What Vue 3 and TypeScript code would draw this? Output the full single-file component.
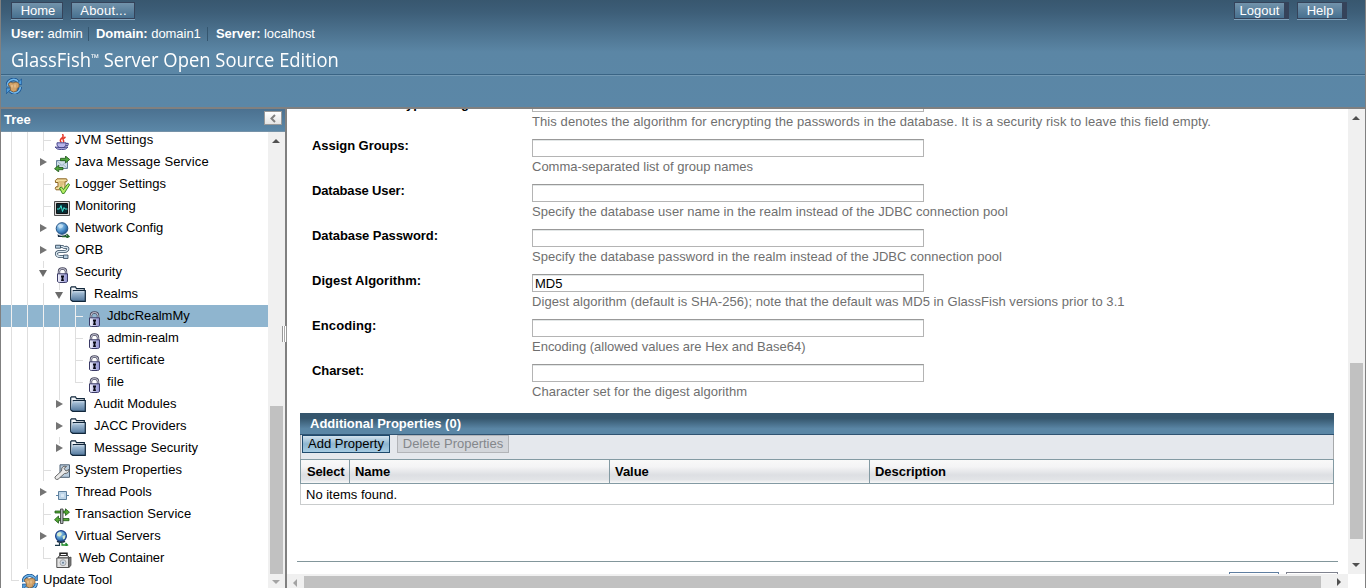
<script setup lang="ts">
interface TreeNode {
  label: string
  icon: string
  level: number
  toggle?: 'open' | 'closed'
  last?: boolean
  stub?: boolean
  selected?: boolean
  drop: number
  spacing: number
}

const nodes: TreeNode[] = [
  { label: 'JVM Settings', icon: 'java', level: 2, drop: 5, spacing: 0.15 },
  { label: 'Java Message Service', icon: 'jms', level: 2, toggle: 'closed', drop: 5, spacing: 0.15 },
  { label: 'Logger Settings', icon: 'logger', level: 2, drop: 5, spacing: 0 },
  { label: 'Monitoring', icon: 'monitor', level: 2, drop: 5, spacing: 0 },
  { label: 'Network Config', icon: 'network', level: 2, toggle: 'closed', drop: 5, spacing: -0.05 },
  { label: 'ORB', icon: 'orb', level: 2, toggle: 'closed', drop: 5, spacing: 0 },
  { label: 'Security', icon: 'lock', level: 2, toggle: 'open', stub: true, drop: 6, spacing: 0 },
  { label: 'Realms', icon: 'folder', level: 3, toggle: 'open', stub: true, drop: 3, spacing: 0 },
  { label: 'JdbcRealmMy', icon: 'lock', level: 4, selected: true, drop: 6, spacing: 0.05 },
  { label: 'admin-realm', icon: 'lock', level: 4, drop: 6, spacing: -0.05 },
  { label: 'certificate', icon: 'lock', level: 4, drop: 6, spacing: 0.2 },
  { label: 'file', icon: 'lock', level: 4, last: true, drop: 6, spacing: 0.1 },
  { label: 'Audit Modules', icon: 'folder', level: 3, toggle: 'closed', stub: true, drop: 3, spacing: 0 },
  { label: 'JACC Providers', icon: 'folder', level: 3, toggle: 'closed', drop: 3, spacing: 0 },
  { label: 'Message Security', icon: 'folder', level: 3, toggle: 'closed', stub: true, drop: 3, spacing: 0.05 },
  { label: 'System Properties', icon: 'props', level: 2, drop: 5, spacing: 0.05 },
  { label: 'Thread Pools', icon: 'pool', level: 2, toggle: 'closed', drop: 5, spacing: -0.05 },
  { label: 'Transaction Service', icon: 'tx', level: 2, drop: 5, spacing: 0.1 },
  { label: 'Virtual Servers', icon: 'vs', level: 2, toggle: 'closed', drop: 5, spacing: 0.05 },
  { label: 'Web Container', icon: 'web', level: 2, last: true, drop: 5, spacing: -0.1 },
  { label: 'Update Tool', icon: 'update', level: 0, last: true, drop: 5, spacing: 0 },
]

interface Field { label: string; value: string; help: string; ls: number; hs: number }
const fields: Field[] = [
  { label: 'Password Encryption Algorithm:', value: '', help: 'This denotes the algorithm for encrypting the passwords in the database. It is a security risk to leave this field empty.', ls: 0, hs: 0.09 },
  { label: 'Assign Groups:', value: '', help: 'Comma-separated list of group names', ls: -0.05, hs: 0 },
  { label: 'Database User:', value: '', help: 'Specify the database user name in the realm instead of the JDBC connection pool', ls: -0.15, hs: 0.05 },
  { label: 'Database Password:', value: '', help: 'Specify the database password in the realm instead of the JDBC connection pool', ls: -0.07, hs: 0.05 },
  { label: 'Digest Algorithm:', value: 'MD5', help: 'Digest algorithm (default is SHA-256); note that the default was MD5 in GlassFish versions prior to 3.1', ls: 0.03, hs: 0.05 },
  { label: 'Encoding:', value: '', help: 'Encoding (allowed values are Hex and Base64)', ls: 0.1, hs: -0.01 },
  { label: 'Charset:', value: '', help: 'Character set for the digest algorithm', ls: -0.1, hs: 0.03 },
]
const columns = ['Select', 'Name', 'Value', 'Description']
</script>

<template>
  <div class="frame">
    <svg class="defs" width="0" height="0" aria-hidden="true">
      <defs>
        <linearGradient id="gFolder" x1="0" y1="0" x2="0" y2="1"><stop offset="0" stop-color="#b3cbe0" /><stop offset="1" stop-color="#53789d" /></linearGradient>
        <linearGradient id="gLock" x1="0" y1="0" x2="1" y2="0"><stop offset="0" stop-color="#f4f4fc" /><stop offset="1" stop-color="#8d8fd0" /></linearGradient>
        <radialGradient id="gGlobe" cx=".35" cy=".3" r=".75"><stop offset="0" stop-color="#b5d9f3" /><stop offset=".6" stop-color="#4b8fc8" /><stop offset="1" stop-color="#1d4f88" /></radialGradient>
      </defs>
      <symbol id="i-java" viewBox="0 0 16 16">
        <path d="M7.500 8.500C5 6.500 7 5 8.500 3.500 9.500 2.500 9 1 8.500 0M11.500 3C9 4.500 8.500 5.500 9.500 6.500 10 7.500 9.500 8 9 8.500" fill="none" stroke="#e5392b" stroke-width="1.500" />
        <path d="M3 8.800h9v2.200q-.5 2-2.500 2.500h-4Q3.500 13 3 11z" fill="#b7b5ea" stroke="#3c3a82" stroke-width=".9" />
        <path d="M12 9.500q3-.5 2 1.300-.7 1-2.500 1" fill="none" stroke="#4d4b91" stroke-width="1.200" />
        <path d="M1 13q6.500 1.500 13 0-1.500 2.700-6.500 2.700T1 13z" fill="#b9b8e6" stroke="#3c3a82" stroke-width=".9" />
      </symbol>
      <symbol id="i-jms" viewBox="0 0 16 16">
        <path d="M2.500 4.500h11v8h-11z" fill="#cfdeea" stroke="#67819a" />
        <path d="M3 5l5 4.500L13 5M3 12l4-3.500M13 12L9 8.500" fill="none" stroke="#93abc0" stroke-width=".8" />
        <path d="M6.500 2.300h5V0l4.200 3.500L11.500 7V4.700h-5z" fill="#4da33a" stroke="#1d5419" stroke-width=".8" />
        <path d="M9 11.500H4.700V9.200L.5 12.700l4.200 3.200v-2.200H9z" fill="#4da33a" stroke="#1d5419" stroke-width=".8" />
      </symbol>
      <symbol id="i-logger" viewBox="0 0 16 16">
        <path d="M3 .8h9.500q1.500 1.500 0 3H11v8H2q-1.500-1.500 0-3h2V4.500H1.500Q.5 2.500 3 .8z" fill="#f3dfa0" stroke="#8a6320" />
        <path d="M4.500 4H11M5.500 6H9.500M5.500 8h3" stroke="#b98f4c" stroke-width=".8" />
        <path d="M5.500 10l2-1 2 2.500L14 5.500l1.700 1.200-5.700 9H8.500z" fill="#b4ec63" stroke="#2d7d1d" stroke-width=".9" />
      </symbol>
      <symbol id="i-monitor" viewBox="0 0 16 16">
        <path d="M.5 1.500h15v14H.5z" fill="#d7d7d7" stroke="#505050" />
        <path d="M2.500 3.500h11v10h-11z" fill="#082c34" stroke="#111" />
        <path d="M3 9h2.500L7 5.500l1.500 6L10 7.500l1 1.500h2.500" fill="none" stroke="#3fe0cf" />
      </symbol>
      <symbol id="i-network" viewBox="0 0 16 16">
        <circle cx="8" cy="6.500" r="5.800" fill="url(#gGlobe)" stroke="#245385" />
        <path d="M3.500 3.500q3-3 6 0-1 3-4 3z" fill="#d2ebf9" opacity=".6" />
        <path d="M3.500 12.300q4.500 3 9 0l-.5 2.700H4z" fill="#172d43" />
        <path d="M8 14.500h7M12.500 12l2.500 2.500-2.500 1.500" fill="none" stroke="#25682b" stroke-width="1.300" />
      </symbol>
      <symbol id="i-orb" viewBox="0 0 16 16">
        <path d="M2 2.500h6.500q1.500 1.500 4 .8 2 .7 1 2.700-1 1.500-3.500 1.500H5q-3 .5-2.500 3 .5 2 4 2h5" fill="none" stroke="#354b60" stroke-width="3" />
        <path d="M2 2.500h6.500q1.500 1.500 4 .8 2 .7 1 2.700-1 1.500-3.500 1.500H5q-3 .5-2.500 3 .5 2 4 2h5" fill="none" stroke="#d9e6ee" stroke-width="1.400" />
        <path d="M1.500 1.200h5v3h-5zM9.500 11h4.500v3.500H9.500z" fill="#b8cfe0" stroke="#2d4358" stroke-width=".8" />
      </symbol>
      <symbol id="i-lock" viewBox="0 0 16 16">
        <path d="M5 8V4.500Q5 1.500 8.500 1.500T12 4.500V8" fill="none" stroke="#4a4a60" stroke-width="2.400" />
        <path d="M5 8V4.500Q5 1.500 8.500 1.500T12 4.500V8" fill="none" stroke="#cfcfdd" stroke-width="1" />
        <path d="M3.500 6.800h10v7.700q-1 1-2 1h-6q-1 0-2-1z" fill="url(#gLock)" stroke="#3a3a66" />
        <path d="M7 8.500h3V10l-.7 1 .7 3H7l.7-3L7 10z" fill="#0a0a16" />
      </symbol>
      <symbol id="i-folder" viewBox="0 0 16 16">
        <path d="M.7 14V1.700L1.500.8h4l1 1.900h7.800v2" fill="#f4f7fa" stroke="#10263a" stroke-width="1.200" />
        <path d="M2.700 4.700h12.600v10.600H2.700L.7 14" fill="url(#gFolder)" stroke="#10263a" stroke-width="1.200" />
        <path d="M3.600 5.700h10.700" stroke="#d3e2ee" />
      </symbol>
      <symbol id="i-props" viewBox="0 0 16 16">
        <path d="M6 .8h9.500v12.500H6z" fill="#b8cbdc" stroke="#4d6175" />
        <path d="M12.500 2.500l-2.500 2 2 2.500 3-1.500q0 4-4.500 4L4 15.300q-2 .7-3-1Q.5 13 2 12L7.500 7q-.5-4 2.500-4.800z" fill="#e9e9e9" stroke="#5a5a5a" stroke-width=".9" />
      </symbol>
      <symbol id="i-pool" viewBox="0 0 16 16">
        <path d="M2 9.500h3M12 9.500h3" stroke="#5b83a6" />
        <path d="M4.500 5.500h8v8h-8z" fill="#bcd4e8" stroke="#5d7f9c" />
        <path d="M7 8h3v3H7z" fill="#d9e8f4" />
      </symbol>
      <symbol id="i-tx" viewBox="0 0 16 16">
        <path d="M1 3h10.500V.8l4 3.400-4 3.300V5H1zM15 10.500H4.500V8l-4 3.700 4 3.500v-2.500H15z" fill="#54a832" stroke="#205919" stroke-width=".8" />
        <path d="M6.500 1h2.500v14.500H6.500z" fill="#aeb6ba" stroke="#333" stroke-width=".8" />
      </symbol>
      <symbol id="i-vs" viewBox="0 0 16 16">
        <circle cx="7" cy="6" r="5.400" fill="url(#gGlobe)" stroke="#1b3f88" stroke-width="1.200" />
        <path d="M3 3.500L6 2l2 2-2 2.500-2.500-.5zM8.500 6l3-1-.5 3.500-2 1z" fill="#d5ecce" />
        <path d="M3 11.300q4 2 8 0" fill="none" stroke="#172d43" stroke-width="1.600" />
        <path d="M1 15.300h4.500v-2.500" fill="none" stroke="#1d3a4a" stroke-width="1.200" />
        <path d="M8 13v2h5M11.500 13l2 2-2 1" fill="none" stroke="#1f8a2a" stroke-width="1.300" />
      </symbol>
      <symbol id="i-web" viewBox="0 0 16 16">
        <path d="M4 4V1.200h7V4" fill="none" stroke="#222" stroke-width="1.500" />
        <path d="M3.500 3.500h8l2 2.500H2z" fill="#eee" stroke="#333" />
        <path d="M.8 6h12v9.500H.8z" fill="#e2e2e2" stroke="#555" /><path d="M12.800 6l2.200-1v8.500l-2.200 2z" fill="#888" stroke="#333" stroke-width=".7" />
        <circle cx="7" cy="10.700" r="3" fill="#cfd8e2" stroke="#999" stroke-width=".8" /><circle cx="7" cy="10.700" r="1" fill="#667e96" />
      </symbol>
      <symbol id="i-update" viewBox="0 0 16 16">
        <path d="M1.500 8A6 6 0 0 1 12 3.500M14.300 9A6 6 0 0 1 4 13" fill="none" stroke="#164f8e" stroke-width="3.200" />
        <path d="M1.500 8A6 6 0 0 1 12 3.500M14.300 9A6 6 0 0 1 4 13" fill="none" stroke="#71b7ea" stroke-width="1.700" />
        <path d="M15.700.8v5.700H10zM.3 15.700V10H6z" fill="#4f9cda" stroke="#164f8e" stroke-width=".7" />
        <path d="M2 6l2.500-1.700L7 5l3-.9 3 1.400V9l-2 1.500v2.300L7.500 14l-3-1.500-.3-3.500z" fill="#d2a36a" stroke="#835a2c" stroke-width=".7" />
        <path d="M6 7v2.500M9 6.500v3" stroke="#f1cf9f" />
      </symbol>
    </svg>

    <header class="masthead">
      <div class="top">
        <div class="btns"><a class="mbtn home">Home</a><a class="mbtn about">About...</a></div>
        <div class="btns right"><a class="mbtn thick logout">Logout</a><a class="mbtn thick help">Help</a></div>
      </div>
      <div class="info">
        <span class="i1"><b>User:</b> admin</span><span class="i2"><b>Domain:</b> domain1</span><span class="i3"><b>Server:</b> localhost</span>
      </div>
      <div class="product"><span>GlassFish<small>™</small> Server Open Source Edition</span></div>
      <div class="notice"><svg class="ico"><use href="#i-update" /></svg></div>
    </header>

    <main class="body">
      <aside class="side">
        <div class="side-head">
          <b>Tree</b>
          <span class="collapse"><svg width="8" height="9" viewBox="0 0 8 9"><path d="M6 1L2.500 4.500 6 8" fill="none" stroke="#808080" stroke-width="2" /></svg></span>
        </div>
        <div class="side-body">
          <div class="tree">
            <div v-for="n in nodes" :key="n.label" class="node" :class="{ sel: n.selected }">
              <i v-for="g in n.level" :key="g" class="guide" />
              <i v-if="n.toggle" class="guide toggle" :class="[n.toggle, { stub: n.stub }]" />
              <i v-else class="guide branch" :class="{ last: n.last }" />
              <svg class="ico" :class="['lv' + n.level, 'd' + n.drop, 'k-' + n.icon]"><use :href="'#i-' + n.icon" /></svg>
              <span class="txt" :style="{ letterSpacing: n.spacing + 'px' }">{{ n.label }}</span>
            </div>
          </div>
          <div class="vbar tree-bar"><i class="arr up" /><i class="thumb" /><i class="arr down dim" /></div>
        </div>
      </aside>
      <div class="split"><i class="grip" /></div>

      <section class="pane">
        <div class="pane-row">
          <div class="content">
            <div class="form">
              <div v-for="f in fields" :key="f.label" class="field">
                <label :style="{ letterSpacing: f.ls + 'px' }">{{ f.label }}</label>
                <div class="ctl">
                  <div class="input">{{ f.value }}</div>
                  <div class="hint" :style="{ letterSpacing: f.hs + 'px' }">{{ f.help }}</div>
                </div>
              </div>
            </div>
            <div class="table">
              <div class="caption">Additional Properties (0)</div>
              <div class="tools"><a class="tbtn add">Add Property</a><a class="tbtn off">Delete Properties</a></div>
              <div class="thead"><b v-for="c in columns" :key="c">{{ c }}</b></div>
              <div class="empty">No items found.</div>
            </div>
            <div class="rule" />
            <div class="actions"><i class="a1" /><i class="a2" /></div>
          </div>
          <div class="vbar pane-bar"><i class="arr up" /><i class="thumb" /><i class="arr down" /></div>
        </div>
        <div class="hbar"><i class="arr left" /><i class="hthumb" /><i class="arr rightw" /><i class="corner" /></div>
      </section>
    </main>
  </div>
</template>

<style>
html, body { margin: 0; overflow: hidden; }
</style>

<style scoped>
.frame { width: 1366px; height: 588px; box-sizing: border-box; border-left: 1px solid #808080; border-right: 1px solid #808080; overflow: hidden; font: 13px/16px "Liberation Sans", Arial, sans-serif; color: #000; background: #fff; display: flex; flex-direction: column; }
.defs { position: absolute; }
.masthead { height: 107px; flex: none; border-bottom: 2px solid #808080; color: #fff; background: linear-gradient(#38576f 0, #3d5e78 12px, #5b86a5 52px, #5b87a7 107px); }
.top { height: 20px; padding: 2px 18px 0 10px; box-sizing: border-box; display: flex; justify-content: space-between; }
.btns { display: flex; gap: 8px; }
.mbtn { height: 17px; box-sizing: border-box; border: 1px solid #35435a; box-shadow: 0 1px 0 #7fa2bb; text-align: center; line-height: 16px; background: linear-gradient(#7293ab, #47708f); }
.home { width: 52px; padding-left: 2px; }
.about { width: 64px; letter-spacing: .2px; padding-left: 1px; }
.thick { border-right-width: 5px; }
.logout { width: 55px; }
.help { width: 50px; }
.info { height: 28px; display: flex; align-items: center; padding-left: 10px; }
.info span { box-sizing: border-box; height: 14px; line-height: 14px; white-space: nowrap; letter-spacing: -.05px; }
.i1 { width: 78px; border-right: 1px solid #35566f; }
.i2 { width: 119px; padding-left: 7px; border-right: 1px solid #35566f; }
.i3 { padding-left: 8px; }
.product { height: 26px; line-height: 24px; padding-left: 10px; font-family: "Open Sans", "Noto Sans", sans-serif; font-size: 19.5px; white-space: nowrap; border-bottom: 1px solid #3a6484; }
.product span { display: inline-block; height: 24px; transform: scaleX(.943); transform-origin: 0 0; }
.product small { font-size: 11px; vertical-align: 5px; line-height: 10px; }
.notice { border-top: 1px solid #7399b4; padding: 2px 5px; }
.ico { width: 16px; height: 16px; display: block; flex: none; }

.body { flex: 1; display: flex; min-height: 0; }
.side { width: 284px; flex: none; display: flex; flex-direction: column; }
.side-head { height: 22px; flex: none; border-bottom: 1px solid #7592a8; background: linear-gradient(#4b7190, #5b87a7); color: #fff; padding: 0 3px; display: flex; justify-content: space-between; line-height: 21px; }
.collapse { width: 18px; height: 14px; box-sizing: border-box; border: 1px solid #999; background: linear-gradient(#fff, #e4e4e4); margin-top: 2px; display: flex; align-items: center; justify-content: center; }
.side-body { flex: 1; min-height: 0; display: flex; overflow: hidden; }
.tree { width: 267px; flex: none; margin-top: -3px; }
.node { height: 22px; padding-left: 2px; display: flex; overflow: hidden; }
.node.sel { background: #8fb5cf; }
.guide { width: 16px; height: 22px; flex: none; background: linear-gradient(#dedede, #dedede) 8px 0 / 1px 22px no-repeat; }
.branch { background: linear-gradient(#dedede, #dedede) 8px 0 / 1px 22px no-repeat, linear-gradient(#dedede, #dedede) 8px 11px / 8px 1px no-repeat; }
.branch.last { background: linear-gradient(#dedede, #dedede) 8px 0 / 1px 11px no-repeat, linear-gradient(#dedede, #dedede) 8px 11px / 8px 1px no-repeat; }
.toggle { background: none; display: flex; align-items: flex-start; justify-content: center; }
.toggle.stub { background: linear-gradient(#dedede, #dedede) 8px 0 / 1px 7px no-repeat; }
.toggle::after { content: ""; border: 0 solid transparent; }
.closed::after { border-left: 7px solid #747474; border-top-width: 4px; border-bottom-width: 4px; margin: 7px 0 0 1px; }
.open::after { border-top: 7px solid #6b6b6b; border-left-width: 4px; border-right-width: 4px; margin: 9px 0 0; }
.sel .guide { filter: brightness(1.08); }
.ico.lv0 { margin-left: 3px; margin-right: 5px; }
.ico.lv2 { margin-left: 3px; margin-right: 5px; }
.ico.lv3 { margin-left: 3px; margin-right: 8px; }
.ico.lv4 { margin-left: 3px; margin-right: 5px; }
.node .k-web { margin-left: 5px; margin-right: 7px; }
.d3 { margin-top: 3px; }
.d5 { margin-top: 5px; }
.d6 { margin-top: 6px; }
.txt { line-height: 21px; white-space: nowrap; }
.split { width: 2px; flex: none; background: #808080; position: relative; }
.grip { position: absolute; left: -3px; top: 217px; width: 5px; height: 16px; box-sizing: border-box; background: #fff; border: 1px solid #999; border-width: 0 1px; box-shadow: inset 1px 0 #fff, inset 2px 0 #aaa; }

.vbar { width: 17px; flex: none; background: #f0f0f0; display: flex; flex-direction: column; align-items: center; }
.thumb { width: 13px; background: #c1c1c1; flex: none; }
.arr { width: 0; height: 0; border: 0 solid transparent; flex: none; }
.up { border-bottom: 4px solid #505050; border-left-width: 4px; border-right-width: 4px; margin-right: 1px; }
.down { border-top: 4px solid #505050; border-left-width: 4px; border-right-width: 4px; margin-right: 1px; }
.down.dim { border-top-color: #a3a3a3; }
.tree-bar .up { margin-top: 7px; }
.tree-bar .thumb { height: 168px; margin: 263px 0 6px; }
.pane-bar .up { margin-top: 7px; }
.pane-bar .thumb { height: 176px; margin: 243px 0 24px; }

.pane { width: 1078px; display: flex; flex-direction: column; }
.pane-row { height: 465px; flex: none; display: flex; }
.content { width: 1061px; height: 465px; overflow: hidden; }
.form { margin-top: -15px; padding-left: 25px; }
.field { height: 45px; display: flex; }
.field label { width: 220px; font-weight: bold; line-height: 13px; white-space: nowrap; }
.field:first-child label { padding-top: 3px; }
.input { width: 392px; height: 18px; box-sizing: border-box; border: 1px solid #b4b4b4; border-top-color: #999; box-shadow: inset 0 1px 0 #e2e6e6; padding-left: 2px; line-height: 17px; }
.hint { line-height: 15px; margin-top: 2px; color: #6f6f6f; white-space: nowrap; }
.table { width: 1034px; margin: 4px 0 0 13px; }
.caption { height: 22px; box-sizing: border-box; border-bottom: 1px solid #2f5372; background: linear-gradient(#35566d 0, #35566d 25%, #5a86a5 75%); color: #fff; font-weight: bold; padding-left: 10px; line-height: 21px; }
.tools { height: 24px; box-sizing: border-box; background: #e5e8ed; border: 1px solid #a6a9ab; border-width: 0 1px; padding-left: 1px; display: flex; gap: 7px; }
.tbtn { height: 18px; box-sizing: border-box; border: 1px solid #1f4a6d; text-align: center; line-height: 16px; }
.add { width: 88px; background: linear-gradient(#d3e3ee 0, #8db5d0 50%, #a6cbe2 100%); }
.off { width: 112px; border-color: #b2b4b8; background: #d3d6db; color: #84878b; }
.thead { height: 25px; box-sizing: border-box; border: 1px solid #839aa3; display: flex; background: linear-gradient(#f9f9f9 0, #f4f4f5 30%, #dddfe3 65%, #e2e4e7 85%, #f8f8f8 100%); line-height: 23px; }
.thead b { box-sizing: border-box; padding-left: 5px; border-right: 1px solid #839aa3; width: 260px; letter-spacing: -.05px; }
.thead b:first-child { width: 49px; padding-left: 6px; letter-spacing: -.15px; }
.thead b:last-child { flex: 1; border-right: 0; }
.empty { height: 21px; box-sizing: border-box; border: 1px solid #c9cccd; border-top: 0; border-right-color: #a6a9ab; padding-left: 5px; line-height: 22px; }
.rule { height: 1px; background: #82969b; margin: 56px 10px 0; }
.actions { display: flex; justify-content: flex-end; gap: 7px; padding: 10px 10px 0 0; }
.actions i { height: 18px; box-sizing: border-box; border: 1px solid #5f7ea0; }
.a1 { width: 50px; }
.actions .a2 { width: 52px; border-color: #80838f; }
.hbar { height: 14px; background: #f0f0f0; display: flex; overflow: hidden; }
.left { border-right: 4px solid #a3a3a3; border-top-width: 4px; border-bottom-width: 4px; margin: 5px 0 0 6px; }
.hthumb { width: 1017px; height: 12px; background: #c1c1c1; margin: 2px 0 0 7px; }
.rightw { border-left: 4px solid #505050; border-top-width: 4px; border-bottom-width: 4px; margin: 4px 7px 0 16px; }
.corner { flex: 1; background: #fff; }
</style>
